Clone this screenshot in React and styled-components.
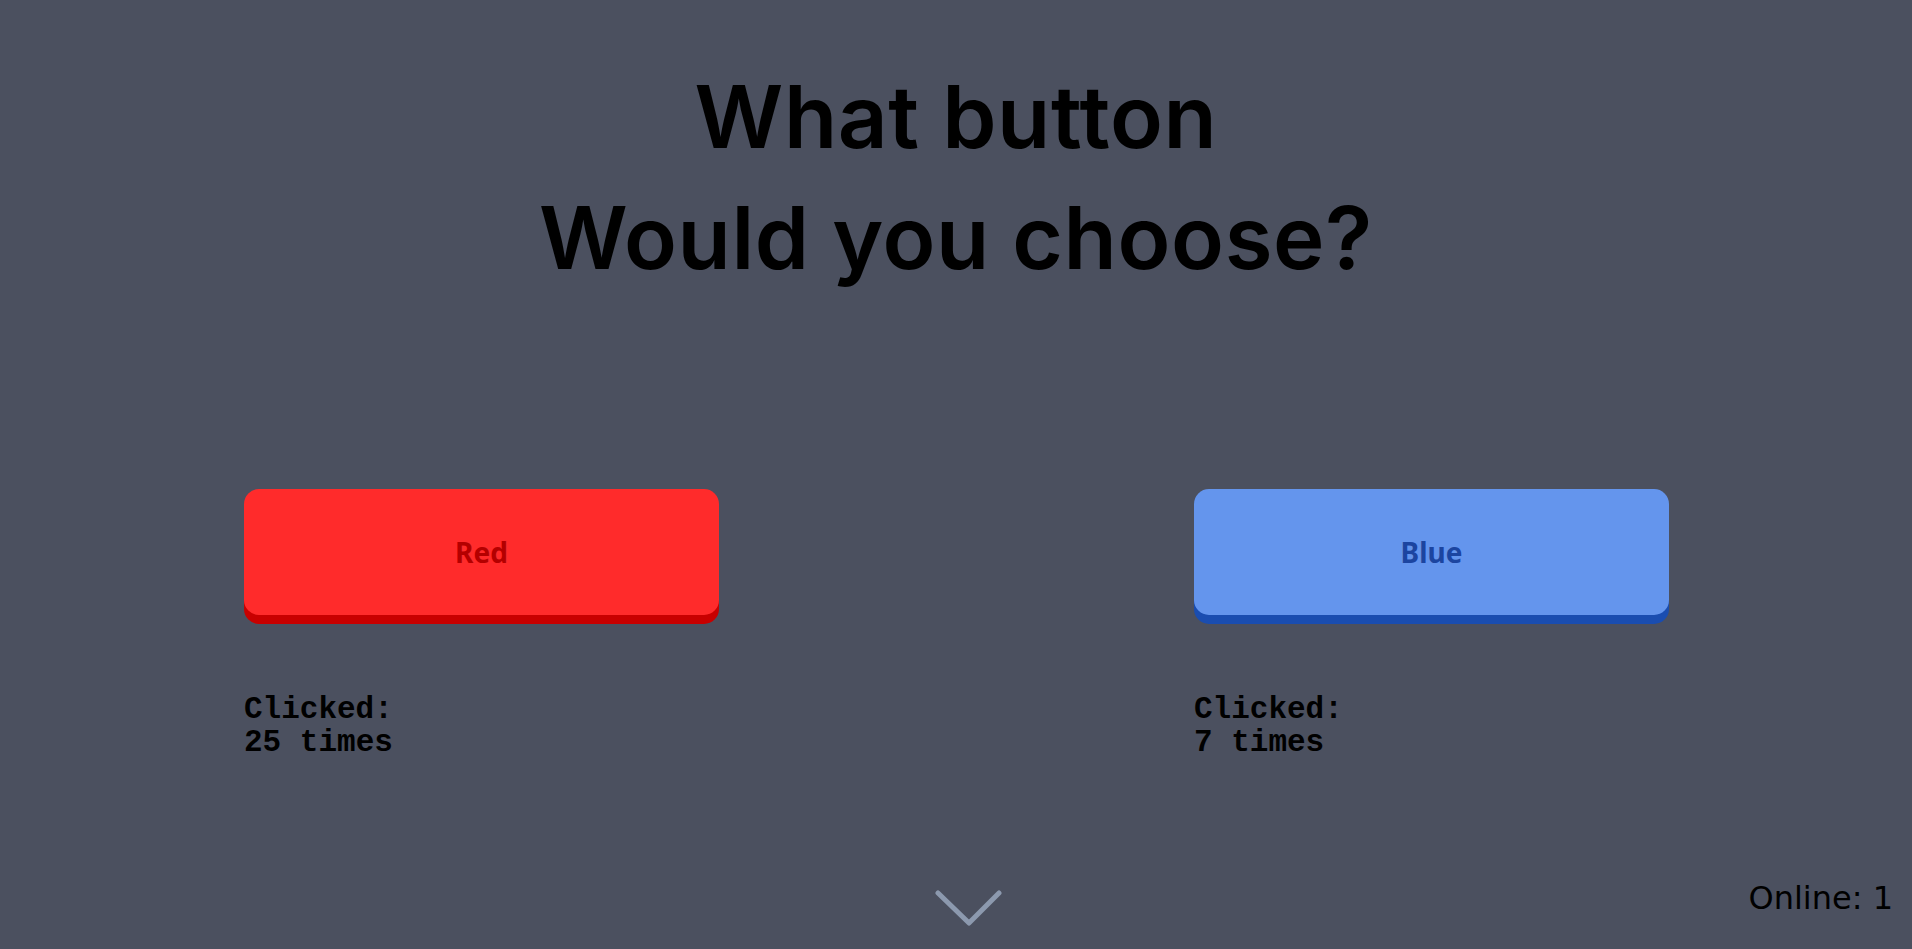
import React from 'react';
import styled, { createGlobalStyle } from 'styled-components';

const GlobalStyle = createGlobalStyle`
	html, body {
		margin: 0;
		padding: 0;
		background-color: #4b505f;
	}
`;

const Page = styled.div`
	min-height: 100vh;
	display: flex;
	flex-direction: column;
	box-sizing: border-box;
`;

const Title = styled.h1`
	margin: 56px 0 0;
	font-family: Inter, "Liberation Sans", sans-serif;
	font-weight: 600;
	font-size: 87px;
	line-height: 121px;
	letter-spacing: 0.6px;
	text-align: center;
	color: #000;
`;

const Choices = styled.div`
	display: flex;
	justify-content: space-between;
	padding: 0 243px 0 244px;
	margin-top: 191px;
`;

const Choice = styled.div`
	width: 475px;
	display: flex;
	flex-direction: column;
`;

const VoteButton = styled.button`
	height: 126px;
	border: none;
	border-radius: 15px;
	background-color: ${(p) => p.$face};
	box-shadow: 0 9px 0 ${(p) => p.$shade};
	color: ${(p) => p.$ink};
	font-family: "Noto Sans", "Open Sans", sans-serif;
	font-weight: 700;
	font-size: 28px;
	cursor: pointer;
`;

const Count = styled.p`
	margin: 78px 0 0;
	font-family: "Liberation Mono", "Courier New", monospace;
	font-weight: 700;
	font-size: 31px;
	line-height: 33px;
	color: #000;
`;

const Footer = styled.div`
	margin-top: auto;
	display: grid;
	grid-template-columns: 1fr auto 1fr;
	align-items: end;
	padding-right: 19px;
`;

const Chevron = styled.svg`
	grid-column: 2;
	margin: 0 0 21px 44px;
	width: 68px;
	height: 38px;
`;

const Online = styled.span`
	grid-column: 3;
	justify-self: end;
	margin-bottom: 32px;
	font-family: "DejaVu Sans", sans-serif;
	font-size: 32px;
	color: #000;
`;

const buttons = [
	{ label: 'Red', face: '#ff2b2b', shade: '#c80000', ink: '#b40000', clicks: 25 },
	{ label: 'Blue', face: '#6495ed', shade: '#1a4db0', ink: '#1c45a0', clicks: 7 },
];

const App = () => (
	<Page>
		<GlobalStyle />
		<Title>
			What button
			<br />
			Would you choose?
		</Title>

		<Choices>
			{buttons.map((b) => (
				<Choice key={b.label}>
					<VoteButton $face={b.face} $shade={b.shade} $ink={b.ink}>
						{b.label}
					</VoteButton>
					<Count>
						Clicked:
						<br />
						{b.clicks} times
					</Count>
				</Choice>
			))}
		</Choices>

		<Footer>
			<Chevron viewBox="0 0 68 38" fill="none">
				<path
					d="M3 3 L34 33 L64 3"
					stroke="#8c99ae"
					strokeWidth="5"
					strokeLinecap="round"
					strokeLinejoin="round"
				/>
			</Chevron>
			<Online>Online: 1</Online>
		</Footer>
	</Page>
);

export default App;
